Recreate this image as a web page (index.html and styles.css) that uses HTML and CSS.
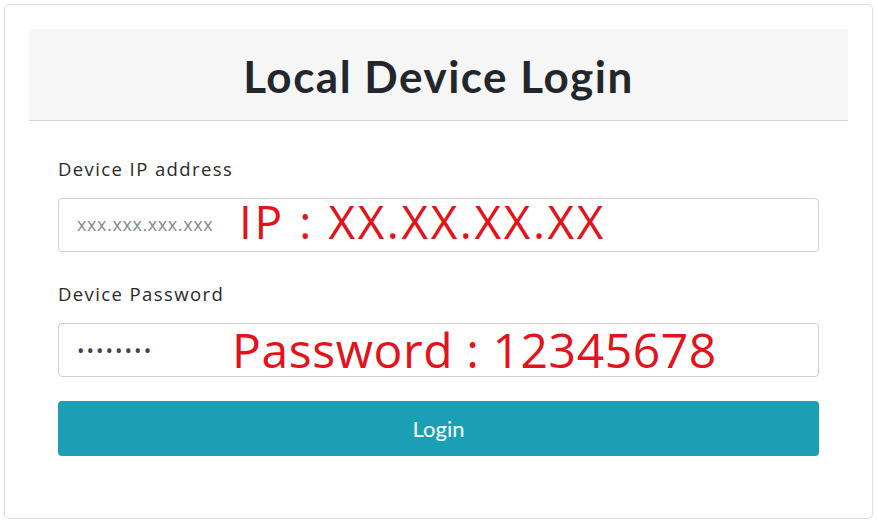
FILE: index.html
```html
<!DOCTYPE html>
<html>
<head>
<meta charset="utf-8">
<link rel="stylesheet" href="styles.css">
</head>
<body>
<div class="card">
  <div class="card-header">
    <h1 class="title">Local Device Login</h1>
  </div>
  <form class="form">
    <label class="label">Device IP address</label>
    <div class="field">
      <input class="input" type="text" placeholder="xxx.xxx.xxx.xxx">
      <span class="note note-ip">IP : XX.XX.XX.XX</span>
    </div>
    <label class="label">Device Password</label>
    <div class="field field-last">
      <input class="input input-pass" type="password" value="12345678">
      <span class="note note-pass">Password : 12345678</span>
    </div>
    <button class="btn" type="button">Login</button>
  </form>
</div>
</body>
</html>
```
FILE: styles.css
```css
html, body {
  margin: 0;
  padding: 0;
  background: #fff;
}
body {
  padding: 4px;
  font-family: "Open Sans", "Noto Sans", sans-serif;
  color: #212529;
}
.card {
  box-sizing: border-box;
  width: 869px;
  height: 515px;
  border: 1px solid #dcdcdc;
  border-radius: 5px;
  padding: 24px;
}
.card-header {
  background: #f6f6f6;
  border-bottom: 1px solid #d6d6d6;
  height: 91px;
  display: flex;
  align-items: center;
  justify-content: center;
}
.title {
  margin: 0;
  font-family: "Lato", sans-serif;
  font-weight: 700;
  font-size: 44px;
  letter-spacing: 1.5px;
  color: #23272b;
  padding-top: 2px;
}
.form {
  padding: 36px 29px 0 29px;
  display: flex;
  flex-direction: column;
}
.label {
  font-family: "Open Sans", sans-serif;
  font-size: 18.5px;
  letter-spacing: 1.4px;
  color: #2a2a2a;
  height: 24px;
  line-height: 24px;
  margin-bottom: 17px;
}
.field {
  position: relative;
  margin-bottom: 30px;
}
.field-last {
  margin-bottom: 24px;
}
.input {
  box-sizing: border-box;
  width: 100%;
  height: 54px;
  border: 1px solid #cfcfcf;
  border-radius: 4px;
  padding: 0 18px;
  font-family: "Open Sans", sans-serif;
  font-size: 15px;
  color: #333;
  outline: none;
}
.input::placeholder {
  color: #8a8a8a;
  font-size: 18px;
  letter-spacing: 0.6px;
}
.input-pass {
  font-size: 20px;
  letter-spacing: 2px;
  color: #444;
}
.note {
  position: absolute;
  top: 50%;
  transform: translateY(-50%);
  color: #e3121b;
  font-family: "Open Sans", sans-serif;
  line-height: 1;
  white-space: nowrap;
  pointer-events: none;
}
.note-ip {
  left: 181px;
  font-size: 46px;
  letter-spacing: 2.6px;
  margin-top: -4px;
}
.note-pass {
  left: 174px;
  font-size: 48px;
  letter-spacing: 0.6px;
}
.btn {
  height: 55px;
  width: 100%;
  border: none;
  border-radius: 4px;
  background: #1a9fb5;
  color: #fff;
  font-family: "Lato", sans-serif;
  font-size: 22px;
  font-weight: 400;
  cursor: pointer;
}
```
